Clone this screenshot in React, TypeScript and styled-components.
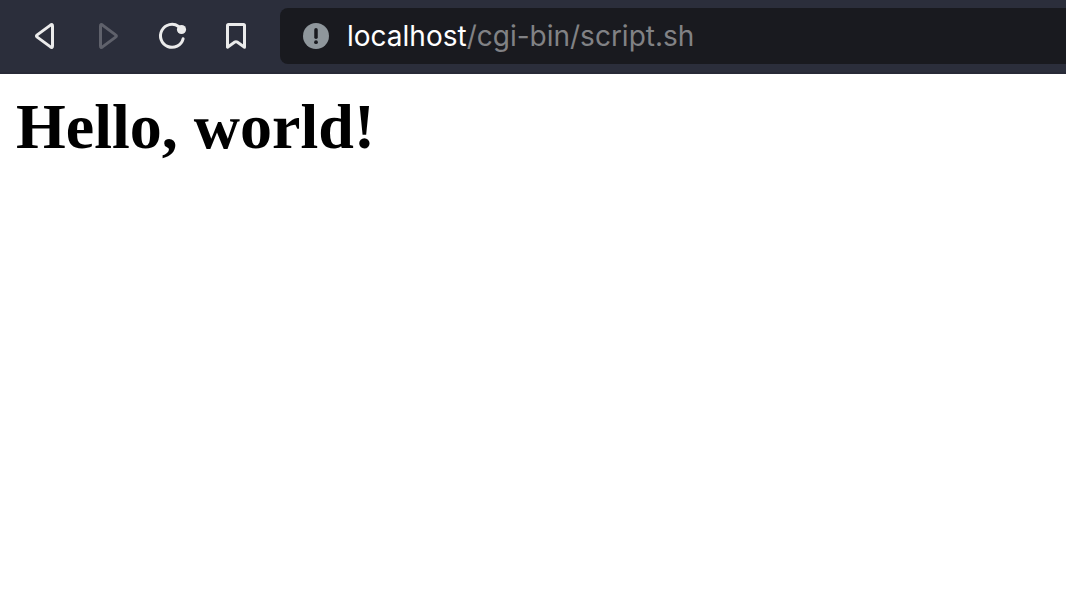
import React from "react";
import styled, { createGlobalStyle } from "styled-components";

const GlobalStyle = createGlobalStyle`
  * { box-sizing: border-box; }
  body { margin: 0; background: #ffffff; }
`;

const Toolbar = styled.header`
  display: flex;
  align-items: center;
  gap: 12px;
  padding: 8px 0 8px 12px;
  background: #2b2e3b;
  border-bottom: 2px solid #282a37;
`;

const NavGroup = styled.nav`
  display: flex;
`;

const NavButton = styled.button`
  display: flex;
  align-items: center;
  justify-content: center;
  width: 64px;
  height: 56px;
  padding: 0;
  border: 0;
  background: none;
  color: #ebebeb;

  &:disabled { color: #5f616b; }
`;

const AddressBar = styled.form`
  display: flex;
  align-items: center;
  flex: 1;
  min-width: 0;
  height: 56px;
  padding-left: 22px;
  border-radius: 8px 0 0 8px;
  background: #191a1f;
  font: 28px/36px Inter, "Liberation Sans", sans-serif;
`;

const SiteInfoButton = styled.button`
  display: flex;
  padding: 0;
  margin-right: 17px;
  border: 0;
  background: none;
`;

const Host = styled.label`
  color: #ffffff;
`;

const PathInput = styled.input`
  flex: 1;
  min-width: 0;
  padding: 0;
  border: 0;
  outline: 0;
  background: none;
  color: #818285;
  font: inherit;
`;

const Page = styled.main`
  padding: 16px;
`;

const Heading = styled.h1`
  margin: 0;
  color: #000000;
  font: bold 64px/74px "Liberation Serif", serif;
`;

const iconProps = {
  width: 32,
  height: 32,
  viewBox: "0 0 32 32",
  fill: "none",
  stroke: "currentColor",
  strokeWidth: 3,
  strokeLinecap: "round" as const,
  strokeLinejoin: "round" as const,
  "aria-hidden": true,
};

const BackIcon = () => (
  <svg {...iconProps}>
    <path d="M24.5 6.1V25.9Q24.5 28.3 22.5 26.9L9.2 17.1Q7.7 16 9.2 14.9L22.5 5.1Q24.5 3.7 24.5 6.1Z" />
  </svg>
);

const ForwardIcon = () => (
  <svg {...iconProps}>
    <path d="M8.5 6.1V25.9Q8.5 28.3 10.5 26.9L23.6 17.1Q25.2 16 23.6 14.9L10.5 5.1Q8.5 3.7 8.5 6.1Z" />
  </svg>
);

const ReloadIcon = () => (
  <svg {...iconProps}>
    <path d="M22.6 6.4A11.5 11.5 0 1 0 27.1 18.8" />
    <circle cx="25.5" cy="9.5" r="4.6" fill="currentColor" stroke="none" />
  </svg>
);

const BookmarkIcon = () => (
  <svg {...iconProps}>
    <path d="M8.5 4.5H23.5Q24.5 4.5 24.5 5.5V27.2L17.2 22.1Q16 21.3 14.8 22.1L7.5 27.2V5.5Q7.5 4.5 8.5 4.5Z" />
  </svg>
);

const InfoIcon = () => (
  <svg width="28" height="28" viewBox="0 0 28 28" aria-hidden="true">
    <circle cx="14" cy="14" r="13" fill="#8f979c" />
    <path d="M14 7.8V15.2" stroke="#191a1f" strokeWidth="3.5" strokeLinecap="round" />
    <circle cx="14" cy="20.2" r="1.9" fill="#191a1f" />
  </svg>
);

export default function App() {
  return (
    <>
      <GlobalStyle />
      <Toolbar>
        <NavGroup aria-label="Navigation">
          <NavButton type="button" aria-label="Back"><BackIcon /></NavButton>
          <NavButton type="button" aria-label="Forward" disabled><ForwardIcon /></NavButton>
          <NavButton type="button" aria-label="Reload"><ReloadIcon /></NavButton>
          <NavButton type="button" aria-label="Bookmark"><BookmarkIcon /></NavButton>
        </NavGroup>
        <AddressBar onSubmit={(event: React.FormEvent) => event.preventDefault()}>
          <SiteInfoButton type="button" aria-label="Site information"><InfoIcon /></SiteInfoButton>
          <Host htmlFor="path">localhost</Host>
          <PathInput id="path" type="text" defaultValue="/cgi-bin/script.sh" spellCheck={false} />
        </AddressBar>
      </Toolbar>
      <Page>
        <Heading>Hello, world!</Heading>
      </Page>
    </>
  );
}
